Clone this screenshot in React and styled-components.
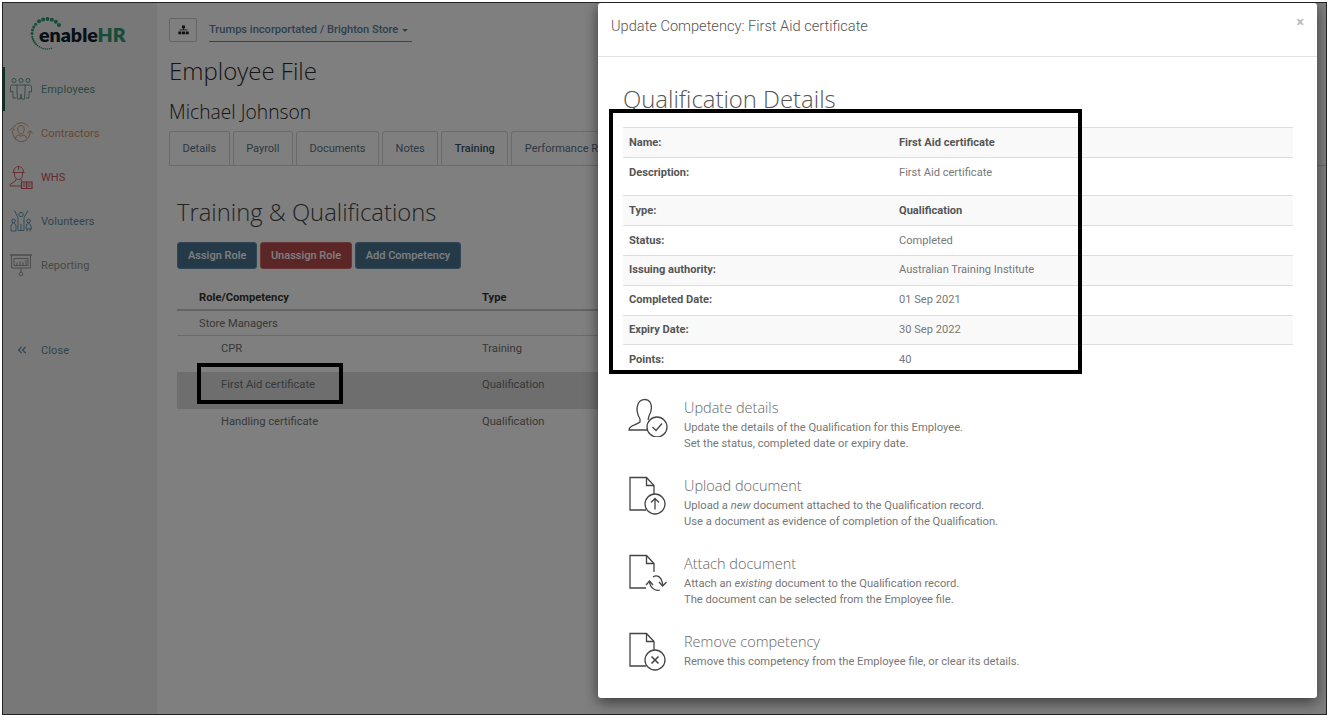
import React from "react";
import styled, { createGlobalStyle } from "styled-components";
import { ChevronsLeft } from "lucide-react";

const GlobalStyle = createGlobalStyle`
  html, body { margin: 0; padding: 0; background: #fff; }
  body { font-family: Roboto, "Liberation Sans", sans-serif; font-size: 11.2px; color: #333; }
`;

const Frame = styled.div`
  position: relative;
  box-sizing: border-box;
  width: 1325px;
  height: 713px;
  margin: 2px 0 0 2px;
  border: 1px solid #222;
  display: flex;
  background: #fff;
  overflow: hidden;
`;

const Sidebar = styled.aside`
  width: 154px;
  flex: none;
  background: #f0f0f0;
  display: flex;
  flex-direction: column;
`;

const Logo = styled.div`
  height: 64px;
  box-sizing: border-box;
  padding: 0 0 2px 27px;
  display: flex;
  align-items: center;
  svg { flex: none; }
`;

const LogoText = styled.span`
  font-family: Lato, sans-serif;
  font-size: 19.6px;
  font-weight: 800;
  color: #10202e;
  margin-left: -25px;
  b { color: #2c9a70; font-weight: 800; }
`;

const NavItem = styled.div`
  height: 44px;
  display: flex;
  align-items: center;
  gap: 8px;
  padding-left: ${(p) => (p.$active ? "4px" : "6px")};
  border-left: ${(p) => (p.$active ? "2px solid #106a4e" : "0")};
  color: ${(p) => p.$color};
  font-size: 11px;
  letter-spacing: 0.1px;
  svg { flex: none; color: ${(p) => p.$color}; }
`;

const CloseItem = styled(NavItem)`
  margin-top: 53px;
  height: 20px;
  padding-left: 12px;
  gap: 12px;
`;

const Main = styled.main`
  flex: 1;
  min-width: 0;
  padding: 15px 0 0 12px;
`;

const TopBar = styled.div`
  display: flex;
  gap: 12px;
  height: 25px;
`;

const OrgButton = styled.button`
  width: 28px;
  height: 24px;
  padding: 0;
  display: flex;
  align-items: center;
  justify-content: center;
  background: #fff;
  border: 1px solid #c8c8c8;
  border-radius: 2px;
  color: #222;
`;

const StoreSelect = styled.div`
  width: 203px;
  height: 24px;
  box-sizing: border-box;
  border-bottom: 1.5px solid #6a8aa4;
  color: #5a82a0;
  font-size: 11.1px;
  font-weight: 500;
  line-height: 24px;
  padding-top: 1px;
  display: flex;
  align-items: center;
  gap: 4px;
  &::after {
    content: "";
    border-top: 3px solid #5a82a0;
    border-left: 3px solid transparent;
    border-right: 3px solid transparent;
  }
`;

const PageTitle = styled.h1`
  margin: 12px 0 0;
  font: 300 24px/32px "Open Sans", sans-serif;
  color: #2a2a2a;
`;

const PersonName = styled.h2`
  margin: 12px 0 0;
  font: 300 19.3px/26px "Open Sans", sans-serif;
  color: #2a2a2a;
`;

const Tabs = styled.div`
  display: flex;
  gap: 3px;
  margin-top: 6px;
  height: 35px;
  box-sizing: border-box;
  border-bottom: 1px solid #d6d6d6;
`;

const Tab = styled.div`
  box-sizing: border-box;
  height: 34px;
  padding: 0 12.5px;
  line-height: 33px;
  border: 1px solid #d6d6d6;
  border-bottom: ${(p) => (p.$active ? "1px solid #fff" : "0")};
  border-radius: 3px 3px 0 0;
  color: ${(p) => (p.$active ? "#3a5568" : "#5a7488")};
  font-size: 11px;
  font-weight: ${(p) => (p.$active ? 500 : 400)};
  white-space: nowrap;
  background: #fff;
`;

const Section = styled.section`
  padding-left: 8px;
`;

const SectionTitle = styled.h2`
  margin: 27px 0 0;
  font: 300 23.8px/38px "Open Sans", sans-serif;
  color: #444;
`;

const Actions = styled.div`
  display: flex;
  gap: 3px;
  margin-top: 11px;
`;

const ActionButton = styled.button`
  height: 27px;
  padding: 0 ${(p) => (p.$danger ? 9.5 : 10)}px;
  border: 1px solid ${(p) => (p.$danger ? "#d06c68" : "#628ba8")};
  border-radius: 3px;
  background: ${(p) => (p.$danger ? "#b84c4c" : "#4a7590")};
  color: #fff;
  font: 500 11px Roboto, sans-serif;
`;

const RoleTable = styled.div`
  margin-top: 15px;
  width: 1130px;
`;

const RoleRow = styled.div`
  display: grid;
  grid-template-columns: ${(p) => (p.$nested ? "261px" : "283px")} 1fr;
  height: ${(p) => p.$height}px;
  padding-left: ${(p) => (p.$nested ? 44 : 22)}px;
  align-items: ${(p) => (p.$nested ? "start" : "center")};
  line-height: 14px;
  background: ${(p) => (p.$selected ? "#dcdcdc" : "transparent")};
  border-bottom: ${(p) => p.$rule || "0"};
  font-weight: ${(p) => (p.$head ? 700 : 400)};
  color: ${(p) => (p.$head ? "#333" : "#707070")};
  > span { padding-top: ${(p) => (p.$nested ? 6 : 2)}px; }
`;

const Backdrop = styled.div`
  position: absolute;
  inset: 0;
  background: rgba(0, 0, 0, 0.5);
`;

const Modal = styled.div`
  position: absolute;
  top: 0;
  left: 595px;
  width: 719px;
  height: 695px;
  background: #fff;
  border-radius: 3px;
  box-shadow: 0 4px 14px rgba(0, 0, 0, 0.55);
`;

const ModalHeader = styled.header`
  height: 54px;
  box-sizing: border-box;
  border-bottom: 1px solid #e5e5e5;
  padding: 13px 13px 0;
  display: flex;
  justify-content: space-between;
  font: 300 14.6px/20px Roboto, sans-serif;
  color: #555;
`;

const CloseMark = styled.span`
  color: #bbb;
  font: 700 14px/14px Roboto, sans-serif;
  margin-top: -1px;
`;

const ModalBody = styled.div`
  padding: 25px 24px 0 25px;
`;

const DetailsTitle = styled.h2`
  margin: 0;
  font: 300 23.9px/33px "Open Sans", sans-serif;
  color: #555;
`;

const DetailsTable = styled.div`
  margin-top: 12px;
  border-top: 1px solid #ddd;
`;

const DetailRow = styled.div`
  display: grid;
  grid-template-columns: 270px 1fr;
  box-sizing: border-box;
  height: ${(p) => p.$height || 30}px;
  padding: ${(p) => (p.$tight ? 7 : 8)}px 6px 0;
  line-height: 14px;
  border-bottom: ${(p) => (p.$last ? "0" : "1px solid #ddd")};
  background: ${(p) => (p.$striped ? "#f9f9f9" : "#fff")};
  font-size: 11.1px;
`;

const DetailLabel = styled.span`
  font-weight: 700;
  color: #555;
`;

const DetailValue = styled.span`
  font-weight: ${(p) => (p.$strong ? 700 : 400)};
  color: ${(p) => (p.$strong ? "#555" : "#777")};
`;

const ActionList = styled.div`
  margin-top: 22px;
  padding-left: 5px;
  display: flex;
  flex-direction: column;
`;

const ActionItem = styled.div`
  display: flex;
  gap: 16px;
  height: 78px;
  svg { flex: none; color: #444; }
`;

const ActionText = styled.div`
  color: #777;
  font-size: 11.2px;
  line-height: 16px;
  padding-top: 2px;
  h3 {
    margin: 0 0 2.5px;
    font: 300 14.5px/18px "Open Sans", sans-serif;
    color: #666;
  }
`;

const Callout = styled.div`
  position: absolute;
  box-sizing: border-box;
  top: ${(p) => p.$top}px;
  left: ${(p) => p.$left}px;
  width: ${(p) => p.$width}px;
  height: ${(p) => p.$height}px;
  border: ${(p) => p.$stroke}px solid #000;
`;

const EmployeesIcon = () => (
  <svg width="24" height="24" viewBox="0 0 24 24" fill="none" stroke="currentColor" strokeWidth="0.9">
    <circle cx="5" cy="3.5" r="2" />
    <circle cx="12" cy="3.5" r="2" />
    <circle cx="19" cy="3.5" r="2" />
    <path d="M8 8H3.5C2 8 1.5 9 1.5 10V15L4 14.5V21H7" />
    <path d="M16 8h4.5C22 8 22.5 9 22.5 10V15L20 14.5V21H17" />
    <path d="M8 8h8V15L15.5 22H12.5L12 17L11.5 22H8.5L8 15Z" />
  </svg>
);

const ContractorsIcon = () => (
  <svg width="24" height="24" viewBox="0 0 26 26" fill="none" stroke="currentColor" strokeWidth="1">
    <path d="M5 7C7 3 12 1 16 2.5C18 3.2 20 4.5 21 6" />
    <path d="M4 10C3.5 15 6 20 11 22C15 23 19 21 21 18" />
    <path d="M1 10L3.8 7.5L6.5 10" />
    <path d="M20 13L23 10.5L25.5 13.5" />
    <path d="M23 11C23 13 22.5 15 21 18" />
    <path d="M9.5 9C9.5 6.5 11 5 13 5C15 5 16.5 6.5 16.5 9C16.5 11.5 15 14 13 14C11 14 9.5 11.5 9.5 9Z" />
    <path d="M7 20C7 16.5 9 15.5 11 15L13 17L15 15C17 15.5 19 16.5 19 19" />
  </svg>
);

const WhsIcon = () => (
  <svg width="24" height="24" viewBox="0 0 24 24" fill="none" stroke="currentColor" strokeWidth="0.9">
    <path d="M4.5 7.5C4.5 3.5 7 1.5 9.5 1.5C12 1.5 14.5 3.5 14.5 7.5" />
    <path d="M3.5 7.5H15.5M9.5 1.5V5" />
    <path d="M5.5 8V10C5.5 12.5 7.5 14.5 9.5 14.5C11.5 14.5 13.5 12.5 13.5 10V8" />
    <path d="M7 14L6.5 16L1 19.5V21H12" />
    <path d="M12 14L12.5 16" />
    <path d="M12.5 17H23V23.5H12.5ZM17.7 17V23.5" strokeWidth="1.2" />
    <path d="M14 19H16.5M14 21H16.5M19 19H21.5M19 21H21.5" />
  </svg>
);

const VolunteersIcon = () => (
  <svg width="24" height="24" viewBox="0 0 24 24" fill="none" stroke="currentColor" strokeWidth="0.9">
    <circle cx="12" cy="5.5" r="2.2" />
    <path d="M5.5 1.5L9 8.5V21.5H15V8.5L19 1.5" />
    <path d="M12 15V21.5" />
    <circle cx="4.5" cy="12" r="1.8" />
    <path d="M2 22V17C2 15.5 3 14.5 4.5 14.5C6 14.5 7 15.5 7 17V22Z" />
    <circle cx="19.5" cy="12" r="1.8" />
    <path d="M17 20L17.5 15.5C18 14.5 21 14.5 21.5 15.5L22.5 20Z" />
    <path d="M18 20V22.5M21 20V22.5" />
  </svg>
);

const ReportingIcon = () => (
  <svg width="24" height="24" viewBox="0 0 24 24" fill="none" stroke="currentColor" strokeWidth="0.9">
    <path d="M1 2H23" strokeWidth="1.4" />
    <path d="M2.5 2.5V15H21.5V2.5" />
    <path d="M5 5.5V12.5H19V5.5Z" />
    <path d="M8 12V9.5M11 12V8M14 12V9M17 12V7" />
    <path d="M12 15V19" />
    <circle cx="12" cy="21" r="1.8" />
  </svg>
);

const OrgIcon = () => (
  <svg width="11" height="10" viewBox="0 0 11 10" fill="currentColor">
    <rect x="4" y="0.5" width="3" height="2.8" />
    <rect x="5.1" y="3" width="0.8" height="2" />
    <rect x="1.5" y="4.5" width="8" height="0.8" />
    <rect x="0.3" y="6.5" width="3" height="2.8" />
    <rect x="4" y="6.5" width="3" height="2.8" />
    <rect x="7.7" y="6.5" width="3" height="2.8" />
  </svg>
);

// ring of dots round the "e", big at the top and fading out at the bottom
const LogoMark = () => {
  const dots = [];
  let deg = -37;
  for (let i = 0; i < 23; i++) {
    const rad = (deg * Math.PI) / 180;
    const size = i < 6 ? 2 : i < 10 ? 1.5 : i < 15 ? 1.1 : 0.8;
    dots.push(<circle key={i} cx={17 + 15 * Math.cos(rad)} cy={17 + 15 * Math.sin(rad)} r={size} fill="#2c9a70" />);
    deg -= i < 6 ? 17 : i < 10 ? 13 : 8;
  }
  return (
    <svg width="34" height="34" viewBox="0 0 34 34">
      {dots}
    </svg>
  );
};

const DocIcon = ({ children }) => (
  <svg width="40" height="40" viewBox="0 0 40 40" fill="none" stroke="currentColor" strokeWidth="1.3">
    <path d="M18 35H2V2.5H18.5L26 10.5V19" />
    <path d="M18.5 2.5V10.5H26" />
    {children}
  </svg>
);

const UpdateIcon = () => (
  <svg width="40" height="40" viewBox="0 0 40 40" fill="none" stroke="currentColor" strokeWidth="1.3">
    <path d="M12 22C9 17 8.5 11 10 7C12 2 19 1 22 5C24 8 24 14 21 19L20 23" />
    <path d="M12 22V25C9 28 1 28 1 33H19" />
    <circle cx="29" cy="30" r="10" />
    <path d="M24.5 30L28 33.5L34 26.5" />
  </svg>
);

const UploadIcon = () => (
  <DocIcon>
    <circle cx="27" cy="29" r="10" />
    <path d="M27 34.5V24M23 27.5L27 23.5L31 27.5" />
  </DocIcon>
);

const AttachIcon = () => (
  <DocIcon>
    <path d="M25 24C29 21 34 24 34.7 32" />
    <path d="M31 29L34.7 33L38.5 29" />
    <path d="M21.5 28C21.5 33 26 39 32 37" />
    <path d="M18 32L21.5 28L25 32" />
  </DocIcon>
);

const RemoveIcon = () => (
  <DocIcon>
    <circle cx="27" cy="29" r="10" />
    <path d="M23.5 25.5L30.5 32.5M30.5 25.5L23.5 32.5" strokeWidth="1.6" />
  </DocIcon>
);

const nav = [
  { label: "Employees", color: "#5a9484", Icon: EmployeesIcon, active: true },
  { label: "Contractors", color: "#d08e60", Icon: ContractorsIcon },
  { label: "WHS", color: "#c85058", Icon: WhsIcon },
  { label: "Volunteers", color: "#5a8cab", Icon: VolunteersIcon },
  { label: "Reporting", color: "#909090", Icon: ReportingIcon },
];

const tabs = ["Details", "Payroll", "Documents", "Notes", "Training", "Performance Reviews", "Leave", "Assets"];

const details = [
  { label: "Name:", value: "First Aid certificate", strong: true },
  { label: "Description:", value: "First Aid certificate", height: 38 },
  { label: "Type:", value: "Qualification", strong: true },
  { label: "Status:", value: "Completed" },
  { label: "Issuing authority:", value: "Australian Training Institute", tight: true },
  { label: "Completed Date:", value: "01 Sep 2021", tight: true },
  { label: "Expiry Date:", value: "30 Sep 2022", tight: true, height: 29 },
  { label: "Points:", value: "40" },
];

const actions = [
  {
    title: "Update details",
    Icon: UpdateIcon,
    lines: ["Update the details of the Qualification for this Employee.", "Set the status, completed date or expiry date."],
  },
  {
    title: "Upload document",
    Icon: UploadIcon,
    lines: [<>Upload a <em>new</em> document attached to the Qualification record.</>, "Use a document as evidence of completion of the Qualification."],
  },
  {
    title: "Attach document",
    Icon: AttachIcon,
    lines: [<>Attach an <em>existing</em> document to the Qualification record.</>, "The document can be selected from the Employee file."],
  },
  {
    title: "Remove competency",
    Icon: RemoveIcon,
    lines: ["Remove this competency from the Employee file, or clear its details."],
  },
];

const App = () => {
  return (
    <>
      <GlobalStyle />
      <Frame>
        <Sidebar>
          <Logo>
            <LogoMark />
            <LogoText>
              enable<b>HR</b>
            </LogoText>
          </Logo>
          {nav.map(({ label, color, Icon, active }) => (
            <NavItem key={label} $color={color} $active={active}>
              <Icon />
              {label}
            </NavItem>
          ))}
          <CloseItem $color="#5a8cab">
            <ChevronsLeft size={14} strokeWidth={2} />
            Close
          </CloseItem>
        </Sidebar>
        <Main>
          <TopBar>
            <OrgButton>
              <OrgIcon />
            </OrgButton>
            <StoreSelect>Trumps incorportated / Brighton Store</StoreSelect>
          </TopBar>
          <PageTitle>Employee File</PageTitle>
          <PersonName>Michael Johnson</PersonName>
          <Tabs>
            {tabs.map((tab) => (
              <Tab key={tab} $active={tab === "Training"}>
                {tab}
              </Tab>
            ))}
          </Tabs>
          <Section>
            <SectionTitle>Training &amp; Qualifications</SectionTitle>
            <Actions>
              <ActionButton>Assign Role</ActionButton>
              <ActionButton $danger>Unassign Role</ActionButton>
              <ActionButton>Add Competency</ActionButton>
            </Actions>
            <RoleTable>
              <RoleRow $head $height={25} $rule="2px solid #c8c8c8">
                <span>Role/Competency</span>
                <span>Type</span>
              </RoleRow>
              <RoleRow $height={24} $rule="1px solid #d4d4d4">
                <span>Store Managers</span>
              </RoleRow>
              <RoleRow $nested $height={36}>
                <span>CPR</span>
                <span>Training</span>
              </RoleRow>
              <RoleRow $nested $selected $height={37}>
                <span>First Aid certificate</span>
                <span>Qualification</span>
              </RoleRow>
              <RoleRow $nested $height={37}>
                <span>Handling certificate</span>
                <span>Qualification</span>
              </RoleRow>
            </RoleTable>
          </Section>
        </Main>
        <Backdrop />
        <Modal>
          <ModalHeader>
            Update Competency: First Aid certificate
            <CloseMark>×</CloseMark>
          </ModalHeader>
          <ModalBody>
            <DetailsTitle>Qualification Details</DetailsTitle>
            <DetailsTable>
              {details.map((row, i) => (
                <DetailRow key={row.label} $striped={i % 2 === 0} $height={row.height} $tight={row.tight} $last={i === details.length - 1}>
                  <DetailLabel>{row.label}</DetailLabel>
                  <DetailValue $strong={row.strong}>{row.value}</DetailValue>
                </DetailRow>
              ))}
            </DetailsTable>
            <ActionList>
              {actions.map(({ title, Icon, lines }) => (
                <ActionItem key={title}>
                  <Icon />
                  <ActionText>
                    <h3>{title}</h3>
                    {lines.map((line, i) => (
                      <div key={i}>{line}</div>
                    ))}
                  </ActionText>
                </ActionItem>
              ))}
            </ActionList>
          </ModalBody>
        </Modal>
        <Callout $top={106} $left={606} $width={473} $height={265} $stroke={4} />
        <Callout $top={360} $left={194} $width={146} $height={41} $stroke={4} />
      </Frame>
    </>
  );
};

export default App;
